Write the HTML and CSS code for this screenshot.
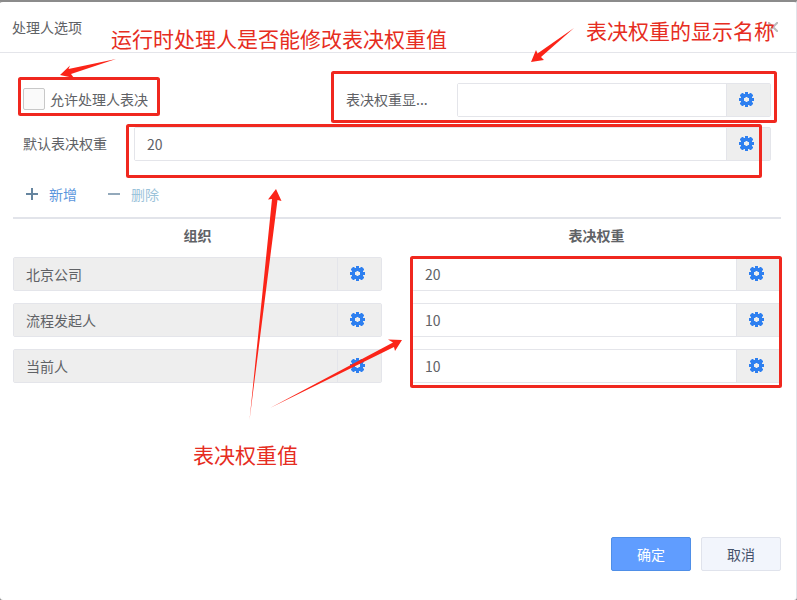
FILE: index.html
```html
<!DOCTYPE html>
<html lang="zh-CN">
<head>
    <meta charset="UTF-8">
    <meta name="viewport" content="width=device-width, initial-scale=1.0">
    <title>处理人选项</title>
    <link rel="stylesheet" href="styles.css">
</head>
<body>
    <svg class="sprite" aria-hidden="true">
        <symbol id="gear" viewBox="0 0 15 15">
            <path fill-rule="evenodd" d="M6 0h3v2h1l1-1h1l2 2v1l-1 1v1h2v3h-2v1l1 1v1l-2 2h-1l-1-1h-1v2h-3v-2h-1l-1 1h-1l-2-2v-1l1-1v-1h-2v-3h2v-1l-1-1v-1l2-2h1l1 1h1zM6.500 5v1h-1.500v3h1.500v1h2v-1h1.500v-3h-1.500v-1z"/>
        </symbol>
    </svg>

    <div class="dialog">
        <div class="dialog-header">
            <h1>处理人选项</h1>
            <button type="button" class="close" aria-label="关闭">
                <svg width="10" height="10" viewBox="0 0 10 10"><path d="M0 0L10 10M10 0L0 10"/></svg>
            </button>
        </div>

        <div class="dialog-body">
            <form class="form">
                <div class="form-row split">
                    <div class="check">
                        <input type="checkbox" id="allow">
                        <label for="allow">允许处理人表决</label>
                    </div>
                    <div class="form-row">
                        <label class="form-label" for="showName">表决权重显...</label>
                        <div class="field">
                            <input type="text" id="showName">
                            <button type="button" aria-label="设置"><svg class="gear"><use href="#gear"/></svg></button>
                        </div>
                    </div>
                </div>
                <div class="form-row">
                    <label class="form-label" for="weight">默认表决权重</label>
                    <div class="field">
                        <input type="text" id="weight" value="20">
                        <button type="button" aria-label="设置"><svg class="gear"><use href="#gear"/></svg></button>
                    </div>
                </div>
            </form>

            <div class="toolbar">
                <button type="button" class="add">
                    <svg width="12" height="12" viewBox="0 0 12 12"><path d="M0 6H12M6 0V12"/></svg>新增
                </button>
                <button type="button" class="remove">
                    <svg width="12" height="12" viewBox="0 0 12 12"><path d="M0 6H12"/></svg>删除
                </button>
            </div>

            <table class="grid">
                <thead>
                    <tr><th>组织</th><th>表决权重</th></tr>
                </thead>
                <tbody>
                    <tr>
                        <td><div class="field readonly"><input type="text" value="北京公司" aria-label="组织" readonly><button type="button" aria-label="设置"><svg class="gear"><use href="#gear"/></svg></button></div></td>
                        <td><div class="field"><input type="text" value="20" aria-label="表决权重"><button type="button" aria-label="设置"><svg class="gear"><use href="#gear"/></svg></button></div></td>
                    </tr>
                    <tr>
                        <td><div class="field readonly"><input type="text" value="流程发起人" aria-label="组织" readonly><button type="button" aria-label="设置"><svg class="gear"><use href="#gear"/></svg></button></div></td>
                        <td><div class="field"><input type="text" value="10" aria-label="表决权重"><button type="button" aria-label="设置"><svg class="gear"><use href="#gear"/></svg></button></div></td>
                    </tr>
                    <tr>
                        <td><div class="field readonly"><input type="text" value="当前人" aria-label="组织" readonly><button type="button" aria-label="设置"><svg class="gear"><use href="#gear"/></svg></button></div></td>
                        <td><div class="field"><input type="text" value="10" aria-label="表决权重"><button type="button" aria-label="设置"><svg class="gear"><use href="#gear"/></svg></button></div></td>
                    </tr>
                </tbody>
            </table>
        </div>

        <div class="dialog-footer">
            <button type="button" class="btn primary">确定</button>
            <button type="button" class="btn">取消</button>
        </div>
    </div>

    <!-- 红色标注 -->
    <svg class="notes" viewBox="0 0 797 600">
        <g class="boxes">
            <rect x="19.500" y="78.500" width="139" height="36" rx="1"/>
            <rect x="332.500" y="72.500" width="443" height="49" rx="1"/>
            <rect x="127.500" y="125.500" width="633" height="51" rx="1"/>
            <rect x="411.500" y="257.500" width="369" height="129" rx="1"/>
        </g>
        <g class="arrows">
            <path d="M116 59L68.500 69L70 65.500L60 75L74 78L71 74Z"/>
            <path d="M574 28L537.500 53.500L536 50L531 62L544 60L541 57Z"/>
            <path d="M249.500 420L272 199L268 199.500L276 189L281.500 201L277.500 200Z"/>
            <path d="M270 408L393 342.500L388 339.500L402 340L395 351L394 347Z"/>
        </g>
        <text x="111" y="47">运行时处理人是否能修改表决权重值</text>
        <text x="586" y="39">表决权重的显示名称</text>
        <text x="193" y="463">表决权重值</text>
    </svg>
</body>
</html>
```
FILE: styles.css
```css
* {
    box-sizing: border-box;
}
body {
    margin: 0;
    background: #8b8b8b;
    color: #606266;
    font-family: "Noto Sans CJK SC", sans-serif;
    font-size: 14px;
    position: relative;
}
button, input {
    font-family: inherit;
    font-size: inherit;
    color: inherit;
    margin: 0;
}
button {
    padding: 0;
    border: 0;
    background: none;
    cursor: pointer;
}
.sprite {
    display: none;
}
.dialog {
    display: flex;
    flex-direction: column;
    min-height: 100vh;
    background: #fff;
    border: 1px solid #e2e3ea;
    border-top-color: #8b8b8b;
    border-width: 2px 1px 0 0;
    border-radius: 3px;
}
.dialog-header {
    display: flex;
    justify-content: space-between;
    align-items: center;
    height: 51px;
    padding: 0 18px 0 12px;
    border-bottom: 1px solid #e4e5ea;
}
.dialog-header h1 {
    margin: 0;
    font-size: 14px;
    font-weight: normal;
}
.close svg {
    display: block;
    fill: none;
    stroke: #bbb;
    stroke-width: 2;
}
.dialog-body {
    flex: 1;
    padding: 30px 15px 0 13px;
}
.form {
    display: flex;
    flex-direction: column;
    gap: 10px;
    padding: 0 10px;
}
.form-row {
    display: flex;
    align-items: center;
}
.form-row.split {
    display: grid;
    grid-template-columns: 323fr 425fr;
}
.form-label {
    width: 111px;
    flex-shrink: 0;
    padding-bottom: 3px;
    white-space: nowrap;
}
.check {
    display: flex;
    align-items: center;
    gap: 5px;
    padding-bottom: 3px;
}
.check label {
    line-height: 20px;
}
.check input {
    appearance: none;
    width: 22px;
    height: 22px;
    border: 1px solid #c8c8c8;
    border-radius: 2px;
    background: #fafafa;
}
.field {
    display: flex;
    flex: 1;
    min-width: 0;
    height: 34px;
    border: 1px solid #e4e5ea;
    border-radius: 2px;
}
.field input {
    flex: 1;
    min-width: 0;
    padding: 0 12px;
    border: 0;
    background: #fff;
    font-size: 14px;
}
.field button {
    width: 44px;
    padding: 0 5px 1px 0;
    border-left: 1px solid #e4e5ea;
    background: #eee;
}
.field.readonly input {
    background: #eee;
}
.gear {
    display: block;
    width: 15px;
    height: 15px;
    margin: 0 auto;
    fill: #2d7ff0;
}
.toolbar {
    display: flex;
    gap: 31px;
    padding: 21px 13px 11px;
}
.toolbar button {
    display: flex;
    align-items: center;
    gap: 11px;
    height: 24px;
}
.toolbar svg {
    fill: none;
    stroke: #66859f;
    stroke-width: 2;
}
.add {
    color: #5b96dd;
}
.remove {
    color: #9bc3da;
}
.remove svg {
    opacity: 0.7;
}
.grid {
    width: 100%;
    table-layout: fixed;
    border-collapse: collapse;
    border-top: 2px solid #e2e4ea;
}
.grid th {
    height: 39px;
    padding: 0 15px 6px 0;
    font-weight: bold;
}
.grid td {
    padding: 0 15px 12px 0;
}
.grid th:last-child {
    padding-right: 0;
    padding-left: 15px;
}
.grid td:last-child {
    padding-right: 0;
    padding-left: 15px;
}
.dialog-footer {
    display: flex;
    justify-content: flex-end;
    gap: 10px;
    padding: 0 15px 29px;
}
.btn {
    width: 80px;
    height: 34px;
    border: 1px solid #e0e3ec;
    border-radius: 2px;
    background: #f2f5fc;
    color: #45536b;
}
.btn.primary {
    border-color: #4f8fe8;
    background: #609dff;
    color: #fff;
}
.notes {
    position: absolute;
    top: 0;
    left: 0;
    width: 100%;
    pointer-events: none;
}
.boxes {
    fill: none;
    stroke: #f0281f;
    stroke-width: 3;
}
.arrows {
    fill: #fb2418;
}
.notes text {
    fill: #e62d22;
    font-size: 21px;
}
```
